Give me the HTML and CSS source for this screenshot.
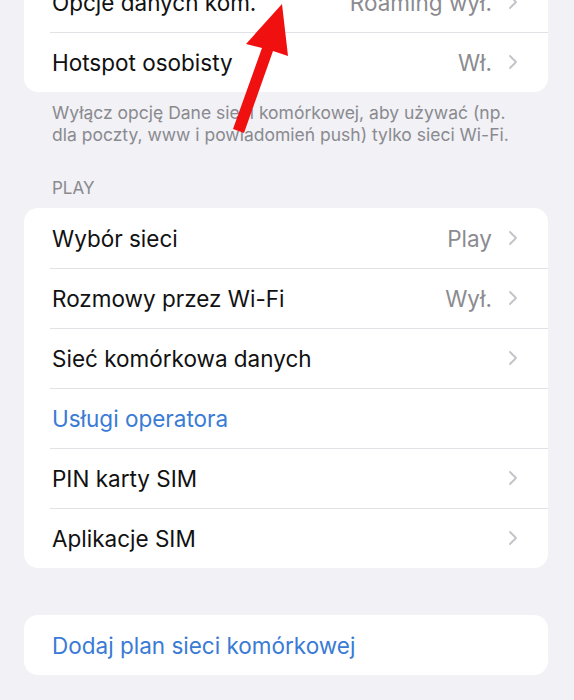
FILE: index.html
```html
<!DOCTYPE html>
<html lang="pl">
<head>
<meta charset="utf-8">
<link rel="stylesheet" href="styles.css">
</head>
<body>
<div class="screen">
  <div class="group group-top">
    <div class="row"><span class="label">Opcje danych kom.</span><span class="value">Roaming wył.</span><span class="chev"><svg viewBox="0 0 10 16"><path d="M2 2l6 6-6 6"/></svg></span></div>
    <div class="row"><span class="label">Hotspot osobisty</span><span class="value">Wł.</span><span class="chev"><svg viewBox="0 0 10 16"><path d="M2 2l6 6-6 6"/></svg></span></div>
  </div>
  <p class="footer">Wyłącz opcję Dane sieci komórkowej, aby używać (np. dla poczty, www i powiadomień push) tylko sieci Wi-Fi.</p>
  <div class="header">PLAY</div>
  <div class="group">
    <div class="row"><span class="label">Wybór sieci</span><span class="value">Play</span><span class="chev"><svg viewBox="0 0 10 16"><path d="M2 2l6 6-6 6"/></svg></span></div>
    <div class="row"><span class="label">Rozmowy przez Wi-Fi</span><span class="value">Wył.</span><span class="chev"><svg viewBox="0 0 10 16"><path d="M2 2l6 6-6 6"/></svg></span></div>
    <div class="row"><span class="label">Sieć komórkowa danych</span><span class="chev"><svg viewBox="0 0 10 16"><path d="M2 2l6 6-6 6"/></svg></span></div>
    <div class="row"><span class="label link">Usługi operatora</span></div>
    <div class="row"><span class="label">PIN karty SIM</span><span class="chev"><svg viewBox="0 0 10 16"><path d="M2 2l6 6-6 6"/></svg></span></div>
    <div class="row"><span class="label">Aplikacje SIM</span><span class="chev"><svg viewBox="0 0 10 16"><path d="M2 2l6 6-6 6"/></svg></span></div>
  </div>
  <div class="group group-last">
    <div class="row"><span class="label link">Dodaj plan sieci komórkowej</span></div>
  </div>
  <svg class="arrow" viewBox="0 0 574 200" width="574" height="200">
    <polygon points="282,4 246,44 262,48 233,129 244,133 273,51 288,56"/>
  </svg>
</div>
</body>
</html>
```
FILE: styles.css
```css
html, body {
  margin: 0;
  padding: 0;
  background: #f1f1f6;
}
.screen {
  position: relative;
  width: 574px;
  height: 700px;
  overflow: hidden;
  font-family: Inter, "Liberation Sans", sans-serif;
  background: #f1f1f6;
}
.group {
  margin: 0 26px 0 24px;
  background: #ffffff;
  border-radius: 14px;
  overflow: hidden;
}
.group-top {
  margin-top: -28px;
}
.row {
  height: 60px;
  display: flex;
  align-items: center;
  padding: 0 30px 0 28px;
  position: relative;
  font-size: 22.5px;
  letter-spacing: 0;
  color: #111;
}
.row + .row::before {
  content: "";
  position: absolute;
  top: 0;
  left: 26px;
  right: 0;
  height: 1px;
  background: #e2e2e6;
}
.label {
  flex: 1;
}
.link {
  color: #3a7bd5;
}
.value {
  color: #8b8b90;
  margin-right: 16px;
}
.chev {
  width: 10px;
  height: 16px;
  display: flex;
}
.chev svg {
  width: 10px;
  height: 16px;
  fill: none;
  stroke: #c3c3c8;
  stroke-width: 1.8;
  stroke-linecap: round;
  stroke-linejoin: round;
}
.footer {
  margin: 0;
  padding: 10px 50px 0 52px;
  font-size: 17.5px;
  line-height: 22px;
  color: #8a8a8f;
}
.header {
  padding: 32px 52px 10px;
  font-size: 17px;
  color: #8a8a8f;
  line-height: 20px;
}
.group-last {
  margin-top: 47px;
}
.arrow {
  position: absolute;
  left: 0;
  top: 0;
  fill: #f01010;
}
```
